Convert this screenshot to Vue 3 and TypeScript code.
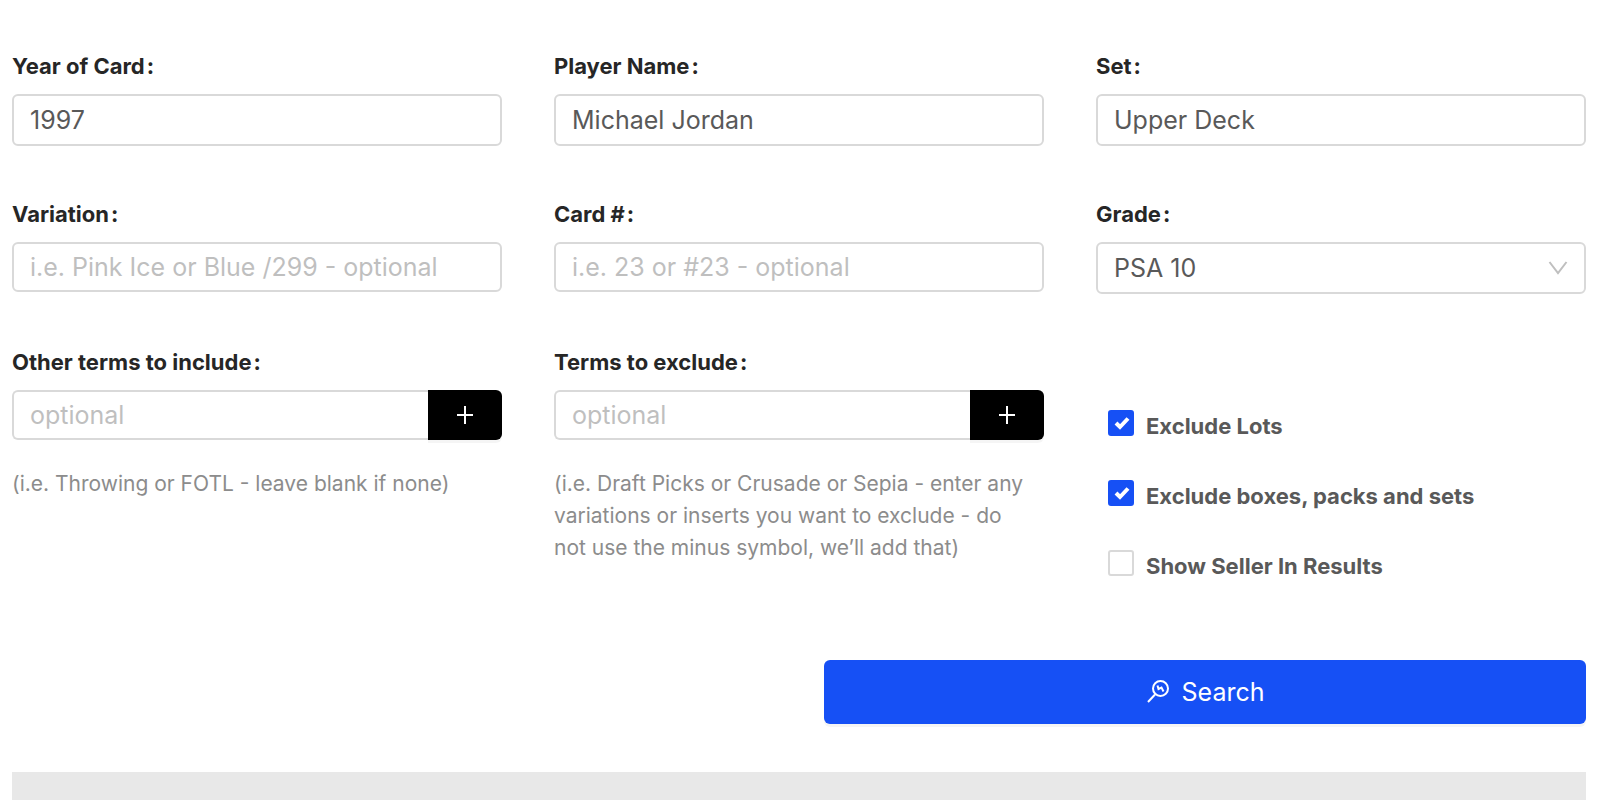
<script setup lang="ts">
import { reactive, ref } from 'vue'

const form = reactive({
  year: '1997',
  player: 'Michael Jordan',
  set: 'Upper Deck',
  variation: '',
  cardNumber: '',
  grade: 'PSA 10',
  include: '',
  exclude: '',
})

const grades = ['PSA 10', 'PSA 9', 'PSA 8', 'Raw']

const includeTerms = ref<string[]>([])
const excludeTerms = ref<string[]>([])

const options = reactive([
  { id: 'exclude-lots', label: 'Exclude Lots', checked: true },
  { id: 'exclude-boxes', label: 'Exclude boxes, packs and sets', checked: true },
  { id: 'show-seller', label: 'Show Seller In Results', checked: false },
])

function addInclude() {
  if (form.include) includeTerms.value.push(form.include)
  form.include = ''
}

function addExclude() {
  if (form.exclude) excludeTerms.value.push(form.exclude)
  form.exclude = ''
}
</script>

<template>
  <main class="page">
    <form id="card-search" class="search-form" @submit.prevent>
      <div class="field">
        <label for="year">Year of Card</label>
        <input id="year" v-model="form.year" class="control tall" type="text" />
      </div>
      <div class="field">
        <label for="player">Player Name</label>
        <input id="player" v-model="form.player" class="control tall" type="text" />
      </div>
      <div class="field">
        <label for="set">Set</label>
        <input id="set" v-model="form.set" class="control tall" type="text" />
      </div>

      <div class="field">
        <label for="variation">Variation</label>
        <input id="variation" v-model="form.variation" class="control" type="text" placeholder="i.e. Pink Ice or Blue /299 - optional" />
      </div>
      <div class="field">
        <label for="card-number">Card #</label>
        <input id="card-number" v-model="form.cardNumber" class="control" type="text" placeholder="i.e. 23 or #23 - optional" />
      </div>
      <div class="field">
        <label for="grade">Grade</label>
        <div class="select-wrap">
          <select id="grade" v-model="form.grade" class="control tall">
            <option v-for="g in grades" :key="g">{{ g }}</option>
          </select>
          <svg class="chevron" viewBox="0 0 20 14" aria-hidden="true">
            <path d="M1.5 1 L10 12 L18.5 1" />
          </svg>
        </div>
      </div>

      <div class="field">
        <label for="include">Other terms to include</label>
        <div class="group">
          <input id="include" v-model="form.include" class="control" type="text" placeholder="optional" />
          <button class="add" type="button" aria-label="Add term to include" @click="addInclude">
            <svg viewBox="0 0 18 18" aria-hidden="true"><path d="M9 0V18M1 9H17" /></svg>
          </button>
        </div>
        <p class="hint">(i.e. Throwing or FOTL - leave blank if none)</p>
      </div>
      <div class="field">
        <label for="exclude">Terms to exclude</label>
        <div class="group">
          <input id="exclude" v-model="form.exclude" class="control" type="text" placeholder="optional" />
          <button class="add" type="button" aria-label="Add term to exclude" @click="addExclude">
            <svg viewBox="0 0 18 18" aria-hidden="true"><path d="M9 0V18M1 9H17" /></svg>
          </button>
        </div>
        <p class="hint">
          (i.e. Draft Picks or Crusade or Sepia - enter any variations or inserts you want to exclude - do not use the
          minus symbol, we’ll add that)
        </p>
      </div>
      <div class="options">
        <label v-for="o in options" :key="o.id" class="option" :for="o.id">
          <span class="box">
            <input :id="o.id" v-model="o.checked" type="checkbox" />
            <svg v-if="o.checked" viewBox="0 0 26 26" aria-hidden="true"><path d="M8 13 L12 17 L20 8.5" /></svg>
          </span>
          <span class="option-text">{{ o.label }}</span>
        </label>
      </div>
    </form>

    <div class="actions">
      <button class="submit" type="submit" form="card-search">
        <svg viewBox="0 0 24 26" aria-hidden="true">
          <circle cx="14.5" cy="9.5" r="7.5" />
          <path d="M9 15.5 L2 23" />
          <path d="M11.5 6.5 L12.5 10 L15.5 8.5 L17.5 12.5" />
        </svg>
        <span>Search</span>
      </button>
    </div>

    <section class="results" aria-label="Results"></section>
  </main>
</template>

<style>
body {
  background: #fff;
}
</style>

<style scoped>
.page {
  display: flex;
  flex-direction: column;
  box-sizing: border-box;
  min-height: 100vh;
  padding: 50px 14px 0 12px;
  color: #595959;
  font-family: Inter, "Liberation Sans", sans-serif;
  font-size: 25px;
}

.search-form {
  display: grid;
  grid-template-columns: repeat(3, minmax(0, 1fr));
  gap: 52px;
}

.field {
  display: flex;
  flex-direction: column;
}

.field > label {
  margin-bottom: 12px;
  color: #262626;
  font-size: 22px;
  font-weight: 700;
  line-height: 32px;
}

.field > label::after {
  content: ":";
  margin-left: 2px;
}

.control {
  box-sizing: border-box;
  width: 100%;
  min-width: 0;
  height: 50px;
  padding: 0 16px;
  border: 2px solid #d9d9d9;
  border-radius: 6px;
  background: #fff;
  color: #595959;
  font-family: inherit;
  font-size: inherit;
  outline: none;
}

.control.tall {
  height: 52px;
}

.control::placeholder {
  color: #bfbfbf;
  opacity: 1;
}

.control:focus-visible {
  border-color: #1650f5;
}

.select-wrap {
  position: relative;
}

select.control {
  display: block;
  appearance: none;
}

.chevron {
  position: absolute;
  top: 19px;
  right: 18px;
  width: 20px;
  height: 14px;
  fill: none;
  stroke: #bfbfbf;
  stroke-width: 2;
  pointer-events: none;
}

.group {
  display: flex;
}

.group .control {
  flex: 1;
  border-right: 0;
  border-radius: 6px 0 0 6px;
}

.add {
  display: flex;
  align-items: center;
  justify-content: center;
  width: 74px;
  padding: 0;
  border: 0;
  border-radius: 0 6px 6px 0;
  background: #000;
  box-shadow: 0 3px 0 rgba(0, 0, 0, 0.04);
  cursor: pointer;
}

.add svg {
  width: 18px;
  height: 18px;
  stroke: #fff;
  stroke-width: 2;
}

.hint {
  margin: 28px 0 0;
  padding-right: 12px;
  color: #8c8c8c;
  font-size: 21px;
  line-height: 32px;
}

.options {
  display: flex;
  flex-direction: column;
  gap: 38px;
  padding: 64px 12px 0;
}

.option {
  display: flex;
  align-items: flex-start;
  gap: 12px;
  font-size: 22px;
  font-weight: 700;
  line-height: 32px;
  cursor: pointer;
}

.box {
  display: grid;
}

.box > * {
  grid-area: 1 / 1;
  width: 26px;
  height: 26px;
}

.box input {
  box-sizing: border-box;
  margin: 0;
  border: 2px solid #d9d9d9;
  border-radius: 3px;
  background: #fff;
  appearance: none;
}

.box input:checked {
  border-color: #1650f5;
  background: #1650f5;
}

.box svg {
  fill: none;
  stroke: #fff;
  stroke-width: 4;
  pointer-events: none;
}

.actions {
  display: grid;
  grid-template-columns: repeat(2, minmax(0, 1fr));
  column-gap: 50px;
  margin: 78px 0 48px;
}

.submit {
  display: flex;
  grid-column: 2;
  align-items: center;
  justify-content: center;
  gap: 12px;
  height: 64px;
  padding: 0;
  border: 0;
  border-radius: 6px;
  background: #1650f5;
  box-shadow: 0 3px 0 rgba(0, 0, 0, 0.04);
  color: #fff;
  font-family: inherit;
  font-size: inherit;
  cursor: pointer;
}

.submit svg {
  width: 24px;
  height: 26px;
  fill: none;
  stroke: #fff;
  stroke-width: 2;
}

.results {
  flex: 1;
  min-height: 28px;
  background: #e8e8e8;
}
</style>
